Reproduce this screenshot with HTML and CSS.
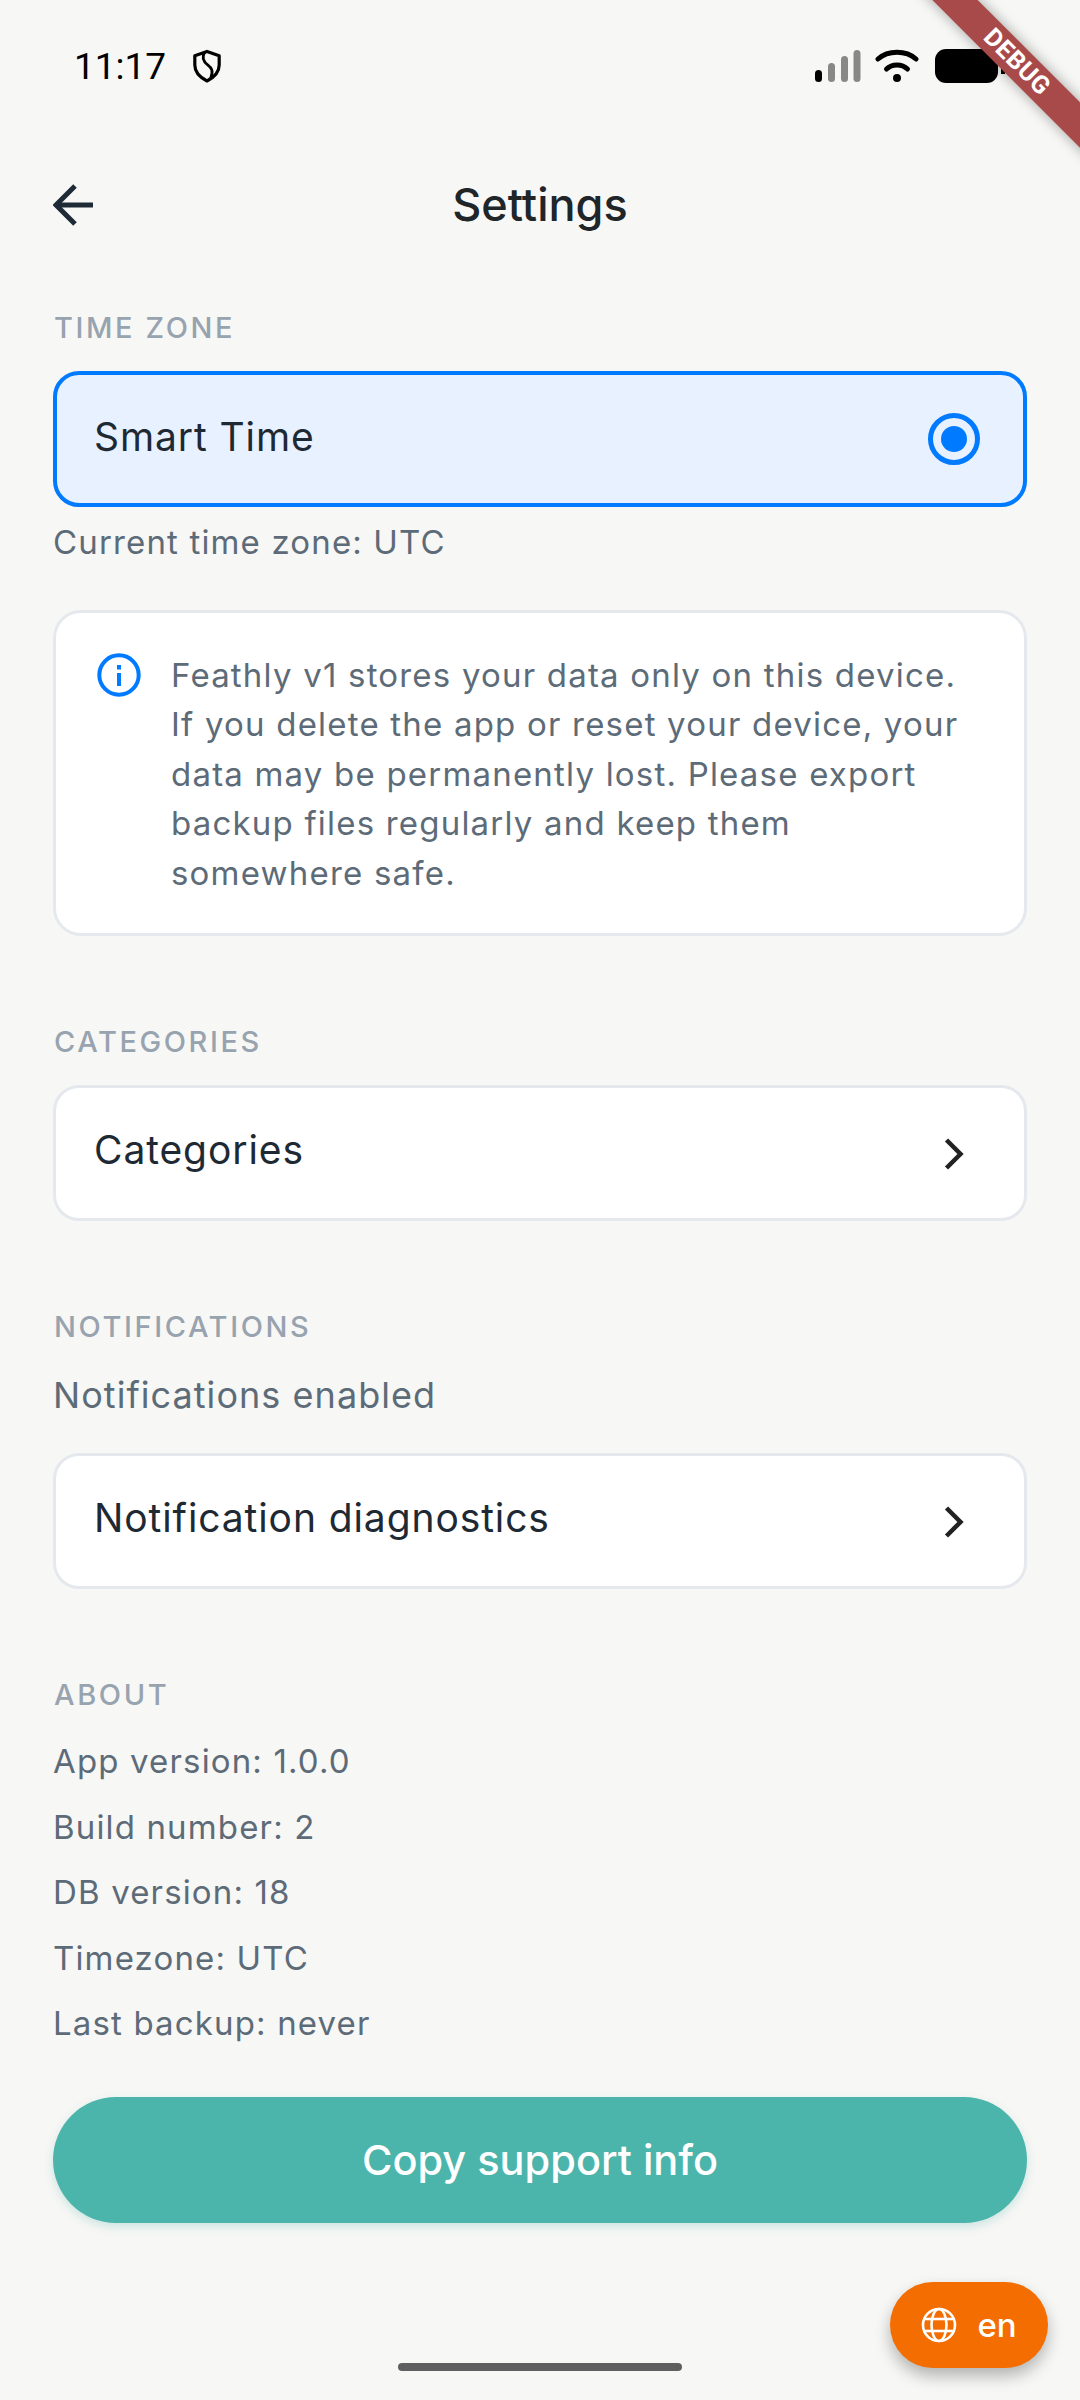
FILE: index.html
```html
<!DOCTYPE html>
<html lang="en">
<head>
    <meta charset="UTF-8">
    <meta name="viewport" content="width=device-width, initial-scale=1.0">
    <title>Settings</title>
    <link rel="stylesheet" href="styles.css">
</head>
<body>

    <!-- Statusleiste -->
    <div class="status-bar">
        <div class="status-left">
            <span class="status-time">11:17</span>
            <svg class="shield" width="30" height="36" viewBox="0 0 32 36" fill="none" stroke="#000" stroke-width="3.4">
                <path d="M16 2.5 L29 7 V17 C29 25 23 30.500 16 34 C9 30.500 3 25 3 17 V7 Z" stroke-linejoin="round"/>
                <path d="M13.500 3 C9.500 10 13 14 17 17 C21 20 23 23 20 31" stroke-width="3"/>
            </svg>
        </div>
        <div class="status-right">
            <svg class="signal" width="46" height="32" viewBox="0 0 46 32">
                <rect x="0" y="20" width="7" height="12" rx="3.500" fill="#000"/>
                <rect x="13" y="13" width="7" height="19" rx="3.500" fill="#888"/>
                <rect x="26" y="6" width="7" height="26" rx="3.500" fill="#888"/>
                <rect x="38.500" y="0" width="7" height="32" rx="3.500" fill="#888"/>
            </svg>
            <svg width="44" height="34" viewBox="0 0 44 34" fill="none" stroke="#000" stroke-width="5" stroke-linecap="round">
                <path d="M3 10 C13 1 31 1 41 10"/>
                <path d="M11.500 20 C17 14.500 27 14.500 32.500 20"/>
                <circle cx="22" cy="29" r="4" fill="#000" stroke="none"/>
            </svg>
            <svg class="battery" width="71" height="34" viewBox="0 0 71 34">
                <rect x="0" y="0" width="63" height="34" rx="11" fill="#000"/>
                <rect x="66" y="10" width="4" height="15" fill="#000"/>
            </svg>
        </div>
    </div>

    <!-- Titel -->
    <header class="app-bar">
        <svg class="back-icon" width="44" height="44" viewBox="0 0 44 44" fill="none" stroke="#1e2a35" stroke-width="5">
            <path d="M40 22 H3"/>
            <path d="M22 3 L3 22 L22 41"/>
        </svg>
        <h1>Settings</h1>
    </header>

    <main class="content">
        <section class="section section-first">
            <h2 class="section-label">TIME ZONE</h2>
            <div class="card card-selected">
                <span class="card-title">Smart Time</span>
                <span class="radio"><span class="radio-dot"></span></span>
            </div>
            <p class="muted hint">Current time zone: UTC</p>

            <div class="info-card">
                <svg class="info-icon" width="44" height="44" viewBox="0 0 44 44" fill="none">
                    <circle cx="22" cy="22" r="19.700" stroke="#007aff" stroke-width="4"/>
                    <rect x="20" y="20" width="4" height="13" fill="#007aff"/>
                    <rect x="20" y="12" width="4" height="4.500" fill="#007aff"/>
                </svg>
                <p class="info-text">Feathly v1 stores your data only on this device. If you delete the app or reset your device, your data may be permanently lost. Please export backup files regularly and keep them somewhere safe.</p>
            </div>
        </section>

        <section class="section">
            <h2 class="section-label">CATEGORIES</h2>
            <div class="card">
                <span class="card-title">Categories</span>
                <svg class="chevron" width="20" height="32" viewBox="0 0 20 32" fill="none" stroke="#222" stroke-width="4.500">
                    <path d="M2.500 2 L16.500 16 L2.500 30"/>
                </svg>
            </div>
        </section>

        <section class="section">
            <h2 class="section-label">NOTIFICATIONS</h2>
            <p class="muted notif-status">Notifications enabled</p>
            <div class="card">
                <span class="card-title">Notification diagnostics</span>
                <svg class="chevron" width="20" height="32" viewBox="0 0 20 32" fill="none" stroke="#222" stroke-width="4.500">
                    <path d="M2.500 2 L16.500 16 L2.500 30"/>
                </svg>
            </div>
        </section>

        <section class="section">
            <h2 class="section-label">ABOUT</h2>
            <div class="about-list">
                <p class="muted">App version: 1.0.0</p>
                <p class="muted">Build number: 2</p>
                <p class="muted">DB version: 18</p>
                <p class="muted">Timezone: UTC</p>
                <p class="muted">Last backup: never</p>
            </div>
        </section>

        <button class="copy-button">Copy support info</button>
    </main>

    <!-- Sprachauswahl -->
    <div class="lang-pill">
        <svg width="36" height="36" viewBox="0 0 36 36" fill="none" stroke="#fff" stroke-width="2.600">
            <circle cx="18" cy="18" r="16"/>
            <ellipse cx="18" cy="18" rx="7.500" ry="16"/>
            <path d="M3.500 12 H32.500"/>
            <path d="M3.500 24 H32.500"/>
        </svg>
        <span>en</span>
    </div>

    <div class="home-indicator"></div>

    <div class="debug-ribbon">DEBUG</div>

</body>
</html>
```

FILE: styles.css
```css
* {
    box-sizing: border-box;
}

html,
body {
    margin: 0;
    padding: 0;
}

body {
    position: relative;
    width: 1080px;
    height: 2400px;
    overflow: hidden;
    background: #f7f7f5;
    font-family: Inter, sans-serif;
    color: #1e2933;
}

p {
    margin: 0;
}

.status-bar {
    display: flex;
    justify-content: space-between;
    align-items: center;
    height: 132px;
    padding: 0 74px 0 74px;
}

.status-left {
    display: flex;
    align-items: center;
    gap: 26px;
}

.status-time {
    font-family: Roboto, sans-serif;
    font-size: 37px;
    color: #000;
}

.status-right {
    display: flex;
    align-items: center;
    gap: 16px;
}

.signal {
    margin-right: -2px;
}

.app-bar {
    position: relative;
    display: flex;
    align-items: center;
    justify-content: center;
    height: 144px;
}

.back-icon {
    position: absolute;
    left: 53px;
    top: 51px;
}

.app-bar h1 {
    margin: 0;
    font-size: 45px;
    font-weight: 500;
    color: #20252a;
}

.content {
    padding: 0 53px;
}

.section {
    margin-top: 88px;
}

.section-first {
    margin-top: 34px;
}

.section-label {
    margin: 0 0 25px 1px;
    font-size: 29px;
    line-height: 36px;
    font-weight: 500;
    letter-spacing: 2.6px;
    color: #97a3af;
}

.card {
    display: flex;
    justify-content: space-between;
    align-items: center;
    height: 136px;
    padding: 0 60px 8px 38px;
    background: #fff;
    border: 3px solid #e5e9ed;
    border-radius: 26px;
}

.card-selected {
    padding: 0 43px 6px 37px;
    background: #e7f1ff;
    border: 4px solid #007aff;
}

.card-title {
    font-size: 39px;
    letter-spacing: 0.9px;
    color: #1e2933;
}

.chevron {
    margin-top: 10px;
}

.radio {
    display: flex;
    align-items: center;
    justify-content: center;
    width: 52px;
    height: 52px;
    margin-top: 6px;
    border: 5px solid #007aff;
    border-radius: 50%;
}

.radio-dot {
    width: 26px;
    height: 26px;
    background: #007aff;
    border-radius: 50%;
}

.muted {
    font-size: 33px;
    line-height: 40px;
    letter-spacing: 1.15px;
    color: #5d6b78;
}

.hint {
    margin-top: 15px;
}

.info-card {
    display: flex;
    gap: 30px;
    margin-top: 48px;
    padding: 38px 62px 35px 41px;
    background: #fff;
    border: 3px solid #e5e9ed;
    border-radius: 28px;
}

.info-icon {
    flex-shrink: 0;
    margin-top: 2px;
}

.info-text {
    font-size: 33px;
    line-height: 49.400px;
    letter-spacing: 1.2px;
    color: #5d6b78;
}

.notif-status {
    margin-top: 30px;
    margin-bottom: 38px;
    font-size: 36px;
    letter-spacing: 1.05px;
}

.about-list {
    display: flex;
    flex-direction: column;
    gap: 25.500px;
    margin-top: 28px;
}

.copy-button {
    display: block;
    width: 100%;
    height: 126px;
    margin-top: 54px;
    border: none;
    border-radius: 63px;
    background: #4cb5ab;
    color: #fff;
    font-family: Inter, sans-serif;
    font-size: 41.500px;
    font-weight: 500;
    box-shadow: 0 4px 10px rgba(76, 181, 171, 0.25);
}

.lang-pill {
    position: absolute;
    left: 890px;
    top: 2282px;
    display: flex;
    align-items: center;
    justify-content: center;
    gap: 20px;
    width: 158px;
    height: 86px;
    background: #f36d00;
    border-radius: 43px;
    color: #fff;
    font-size: 33px;
    font-weight: 500;
    box-shadow: 0 8px 16px rgba(0, 0, 0, 0.28);
}

.home-indicator {
    position: absolute;
    left: 398px;
    top: 2363px;
    width: 284px;
    height: 8px;
    background: #5f5f5f;
    border-radius: 4px;
}

.debug-ribbon {
    position: absolute;
    left: 897px;
    top: 46px;
    width: 240px;
    height: 32px;
    line-height: 32px;
    text-align: center;
    transform: rotate(45deg);
    background: #a94a4a;
    color: #fff;
    font-family: Roboto, sans-serif;
    font-size: 25px;
    font-weight: 700;
    letter-spacing: 0.5px;
    box-shadow: 0 0 14px rgba(0, 0, 0, 0.35);
}
```
